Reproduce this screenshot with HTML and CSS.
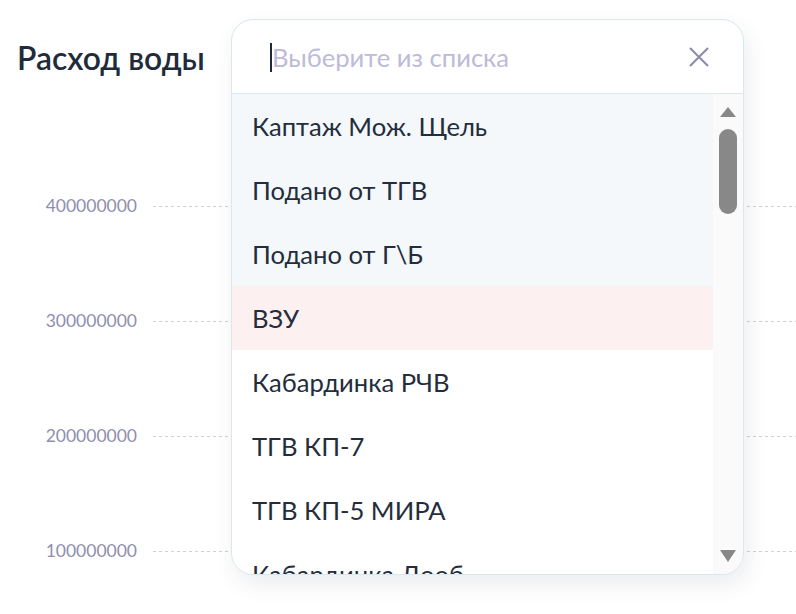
FILE: index.html
```html
<!DOCTYPE html>
<html lang="ru">
<head>
<meta charset="utf-8">
<link rel="stylesheet" href="styles.css">
</head>
<body>
<div class="page">
  <h1 class="title">Расход воды</h1>
  <div class="chart">
    <div class="grid-row"><span class="tick">400000000</span><span class="line"></span></div>
    <div class="grid-row"><span class="tick">300000000</span><span class="line"></span></div>
    <div class="grid-row"><span class="tick">200000000</span><span class="line"></span></div>
    <div class="grid-row"><span class="tick">100000000</span><span class="line"></span></div>
  </div>

  <div class="dropdown">
    <div class="dd-head">
      <span class="caret"></span>
      <span class="placeholder">Выберите из списка</span>
      <svg class="close" width="22" height="22" viewBox="0 0 22 22"><path d="M2 2L20 20M20 2L2 20" stroke="#8e8eaa" stroke-width="2.2" fill="none"/></svg>
    </div>
    <div class="dd-body">
      <ul class="dd-list">
        <li class="item sel">Каптаж Мож. Щель</li>
        <li class="item sel">Подано от ТГВ</li>
        <li class="item sel">Подано от Г\Б</li>
        <li class="item hover">ВЗУ</li>
        <li class="item">Кабардинка РЧВ</li>
        <li class="item">ТГВ КП-7</li>
        <li class="item">ТГВ КП-5 МИРА</li>
        <li class="item">Кабардинка Дооб</li>
      </ul>
      <div class="scrollbar">
        <svg class="arrow" width="16" height="10" viewBox="0 0 16 10"><path d="M8 0L16 10H0Z" fill="#888"/></svg>
        <div class="thumb"></div>
        <div class="track-fill"></div>
        <svg class="arrow" width="16" height="12" viewBox="0 0 16 12"><path d="M0 0H16L8 12Z" fill="#888"/></svg>
      </div>
    </div>
  </div>
</div>
</body>
</html>
```
FILE: styles.css
```css
* { box-sizing: border-box; }
html, body { margin: 0; padding: 0; background: #fff; }
body { font-family: Lato, "Noto Sans", sans-serif; width: 796px; height: 614px; overflow: hidden; }
.page { position: relative; width: 796px; height: 614px; }
.title {
  margin: 0;
  padding: 38px 0 0 17px;
  font-size: 31.8px;
  font-weight: 600;
  color: #1f2a3a;
  line-height: 40px;
}
.chart {
  display: flex;
  flex-direction: column;
  gap: 97px;
  padding-top: 119px;
}
.grid-row {
  display: flex;
  align-items: center;
  height: 18px;
}
.tick {
  width: 137px;
  text-align: right;
  font-size: 17.5px;
  color: #8f8fae;
  line-height: 18px;
}
.line {
  flex: 1;
  margin-left: 16px;
  height: 1px;
  background-image: repeating-linear-gradient(to right, #cfcfd6 0 3px, transparent 3px 6px);
}
.dropdown {
  position: absolute;
  left: 231px;
  top: 19px;
  width: 513px;
  height: 556px;
  background: #fff;
  border: 1px solid #dbe7ee;
  border-radius: 22px;
  overflow: hidden;
  box-shadow: 4px 10px 22px rgba(40, 50, 80, 0.09);
  display: flex;
  flex-direction: column;
}
.dd-head {
  height: 74px;
  flex: none;
  display: flex;
  align-items: center;
  padding: 0 33px 0 38px;
  border-bottom: 1px solid #dbe7ee;
}
.caret {
  width: 2px;
  height: 29px;
  background: #1f2a3a;
  margin-top: 2px;
}
.placeholder {
  flex: 1;
  font-size: 25.6px;
  color: #bdbbd9;
  line-height: 30px;
}
.close { flex: none; }
.dd-body {
  flex: 1;
  display: flex;
  min-height: 0;
}
.dd-list {
  list-style: none;
  margin: 0;
  padding: 0;
  flex: 1;
}
.item {
  height: 64px;
  display: flex;
  align-items: center;
  padding-left: 20px;
  font-size: 25.6px;
  color: #232d3c;
  white-space: nowrap;
}
.item.sel { background: #f4f8fb; }
.item.hover { background: #fdf0f0; }
.scrollbar {
  width: 30px;
  flex: none;
  background: #fafafa;
  display: flex;
  flex-direction: column;
  align-items: center;
  padding-top: 13px;
  padding-bottom: 12px;
}
.arrow { flex: none; }
.thumb {
  width: 18px;
  height: 85px;
  border-radius: 9px;
  background: #888;
  margin-top: 12px;
}
.track-fill { flex: 1; }
```
